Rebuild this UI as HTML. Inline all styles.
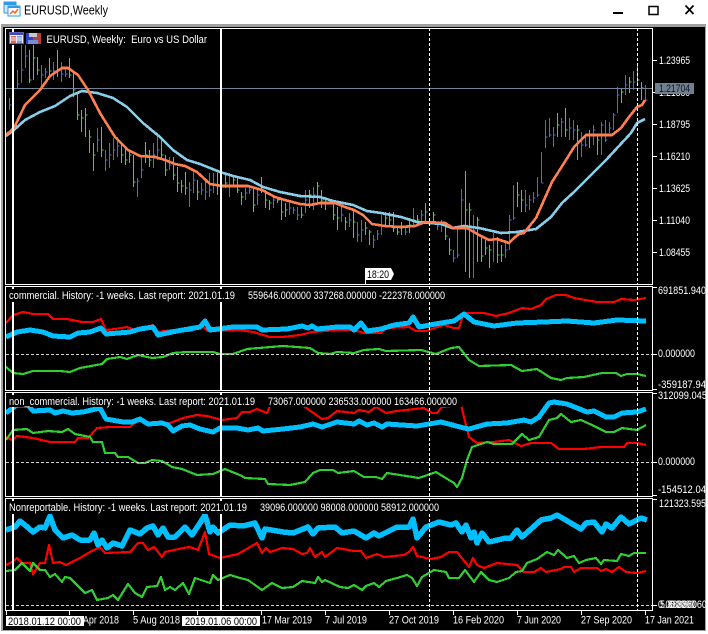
<!DOCTYPE html>
<html><head><meta charset="utf-8"><title>EURUSD,Weekly</title>
<style>
html,body{margin:0;padding:0;background:#fff;width:708px;height:634px;overflow:hidden}
svg{display:block;position:absolute;left:0;top:0}
text{font-family:"Liberation Sans",sans-serif;font-size:11px;fill:#fff}
.s{fill:none;stroke-linejoin:round;shape-rendering:crispEdges}
.c{shape-rendering:crispEdges}
</style></head><body>
<svg width="708" height="634" viewBox="0 0 708 634" xmlns="http://www.w3.org/2000/svg">
<rect width="708" height="634" fill="#fff"/>
<rect x="1" y="24" width="705" height="607" fill="#a0a0a0" class="c"/>
<rect x="3" y="27" width="702" height="603" fill="#000" class="c"/>

<!-- title icon -->
<rect x="4" y="2" width="12" height="11" fill="#cfe6fa" stroke="#3a9be0" class="c"/>
<rect x="4" y="2" width="12" height="3" fill="#2f9be6" class="c"/>
<rect x="8" y="6" width="12" height="10" fill="#fff" stroke="#2f9be6" class="c"/>
<rect x="8" y="6" width="12" height="2" fill="#2f9be6" class="c"/>
<path d="M10 14l3-3 2 2 3-4" fill="none" stroke="#f06a20" stroke-width="1.5"/>
<text x="24" y="14.5" style="font-size:13px;fill:#000" textLength="84" lengthAdjust="spacingAndGlyphs">EURUSD,Weekly</text>

<!-- window controls -->
<rect x="613" y="12" width="10" height="2" fill="#000" class="c"/>
<rect x="649" y="6.5" width="9" height="8" fill="none" stroke="#000" stroke-width="1.5"/>
<path d="M685.5 5.5l8 8.5M693.5 5.5l-8 8.5" stroke="#000" stroke-width="1.7" fill="none"/>

<!-- bars -->
<g transform="translate(.5 0)" class="c" fill="none" stroke-width="1">
<path stroke="#4169ff" d="M9 98V110M9 105h2M17 70V88M17 84h2M21 45V83M21 70h2M25 43V68M25 56h2M41 65V87M41 75h2M45 68V78M45 72h2M53 62V80M53 71h2M61 62V82M61 74h2M65 68V77M65 74h2M97 128V152M97 140h2M105 150V171M105 160h2M109 143V168M109 155h2M113 138V160M113 150h2M117 137V157M117 146h2M137 178V197M137 181h2M141 155V178M141 170h2M153 143V168M153 155h2M157 133V160M157 150h2M169 157V170M169 165h2M189 182V207M189 190h2M193 170V193M193 180h2M201 183V195M201 190h2M205 178V200M205 192h2M209 173V197M209 190h2M213 173V193M213 185h2M229 173V197M229 185h2M245 188V200M245 193h2M249 187V194M249 190h2M257 188V205M257 195h2M273 195V208M273 200h2M289 202V215M289 208h2M293 207V214M293 210h2M297 207V220M297 215h2M305 190V213M305 200h2M313 187V210M313 195h2M341 207V222M341 215h2M349 213V227M349 220h2M357 222V242M357 235h2M361 220V242M361 230h2M373 235V248M373 240h2M377 230V240M377 234h2M381 215V235M381 225h2M405 228V235M405 232h2M413 208V227M413 220h2M421 210V225M421 215h2M437 222V230M437 226h2M441 220V232M441 225h2M453 250V262M453 258h2M457 228V258M457 255h2M461 189V228M461 200h2M473 215V278M473 230h2M493 233V262M493 240h2M505 240V258M505 250h2M509 215V250M509 220h2M513 185V220M513 218h2M525 190V212M525 205h2M529 195V210M529 200h2M533 192V203M533 198h2M537 177V197M537 195h2M541 152V183M541 183h2M545 120V148M545 137h2M549 118V137M549 135h2M553 127V147M553 135h2M561 118V137M561 122h2M569 118V140M569 128h2M573 120V140M573 130h2M581 132V157M581 145h2M585 135V147M585 145h2M593 125V145M593 130h2M601 122V155M601 125h2M605 120V142M605 140h2M609 122V133M609 128h2M613 113V130M613 115h2M617 87V113M617 95h2M625 75V95M625 85h2M633 71V90M633 82h2M645 85V100M645 100h2"/>
<path stroke="#32e032" d="M29 50V83M29 80h2M33 43V80M33 58h2M37 57V75M37 70h2M49 58V75M49 71h2M57 50V77M57 70h2M69 58V78M69 75h2M73 73V97M73 90h2M77 93V120M77 115h2M81 110V132M81 118h2M85 108V137M85 115h2M89 130V153M89 137h2M93 143V171M93 155h2M101 127V157M101 150h2M121 145V163M121 155h2M125 147V165M125 160h2M129 150V163M129 155h2M133 155V187M133 182h2M145 142V163M145 155h2M149 150V167M149 160h2M161 137V160M161 155h2M165 155V176M165 170h2M173 157V180M173 175h2M177 167V192M177 183h2M181 180V193M181 186h2M185 172V195M185 188h2M197 180V200M197 192h2M217 173V195M217 185h2M225 173V188M225 183h2M233 175V187M233 180h2M237 177V193M237 190h2M241 192V205M241 197h2M253 188V212M253 205h2M261 177V193M261 190h2M265 190V208M265 200h2M269 200V210M269 203h2M277 197V203M277 200h2M281 198V220M281 212h2M285 203V217M285 210h2M301 207V218M301 215h2M309 190V208M309 195h2M317 182V205M317 186h2M321 190V208M321 200h2M325 197V210M325 204h2M333 203V220M333 215h2M337 207V230M337 218h2M345 217V230M345 222h2M353 210V238M353 222h2M365 222V235M365 228h2M369 230V245M369 232h2M385 212V225M385 218h2M389 212V227M389 220h2M393 212V232M393 228h2M397 228V235M397 232h2M401 222V235M401 228h2M409 218V233M409 225h2M417 215V223M417 220h2M425 203V222M425 212h2M433 212V222M433 215h2M445 222V240M445 236h2M449 238V255M449 250h2M465 171V272M465 210h2M469 203V278M469 210h2M477 217V262M477 220h2M481 238V262M481 256h2M485 240V255M485 248h2M489 245V268M489 250h2M497 237V263M497 255h2M501 245V262M501 255h2M517 182V207M517 195h2M521 190V212M521 200h2M557 113V137M557 125h2M565 108V137M565 130h2M577 125V160M577 130h2M589 130V148M589 135h2M597 135V155M597 140h2M621 88V103M621 92h2M629 77V93M629 82h2M637 65V85M637 80h2M641 82V100M641 88h2"/>
</g>

<!-- price line -->
<line x1="6" y1="88.5" x2="652" y2="88.5" stroke="#6f8499" class="c"/>

<!-- MAs -->
<polyline class="s" stroke="#87ceeb" stroke-width="2.6" points="6,136 14,130 25,120 40,112 55,106 70,96 82,91 97,93 113,98 127,107 143,123 160,137 173,150 187,160 200,164 220,172 233,176 250,180 263,187 280,192 300,196 320,197 333,201 353,205 367,211 381,213 401,217 417,222 441,224 452,228 464,226 479,228 501,233 517,232 536,229 551,217 562,203 574,192 594,172 606,160 631,133 637,123 645,119"/>
<polyline class="s" stroke="#ff7f50" stroke-width="2.6" points="6,135 14,128 25,105 40,90 50,76 62,68 68,68 78,75 88,90 100,113 115,137 128,150 140,156 155,157 165,160 175,164 185,166 197,172 210,184 222,186 248,186 262,190 275,197 285,200 300,204 310,205 320,203 335,203 345,207 354,210 363,215 372,224 385,226 400,227 415,226 425,222 445,223 453,228 467,228 479,235 489,240 497,239 509,243 514,238 519,234 524,233 536,218 544,200 552,182 566,160 574,147 586,135 612,135 621,128 629,117 637,107 642,105 645,100"/>

<!-- pane 1 series -->
<polyline class="s" stroke="#ff0000" stroke-width="2.2" points="6,323 13,315 23,312 33,314 48,314 53,319 67,319 82,322 93,322 101,319 106,330 115,329 127,327 135,330 147,327 153,325 157,332 173,330 190,331 203,327 208,331 240,330 253,332 270,337 283,337 300,335 312,332 337,330 354,330 364,333 381,333 387,328 409,327 416,331 426,331 444,325 454,328 459,328 464,313 484,313 496,316 509,313 522,308 531,309 541,305 546,299 556,295 566,295 574,298 597,302 614,302 621,299 634,300 646,298"/>
<polyline class="s" stroke="#32cd32" stroke-width="2.2" points="6,367 13,373 23,374 33,371 60,371 70,372 80,368 102,364 107,359 120,357 127,359 138,355 152,358 163,357 173,353 187,352 213,352 220,354 233,354 247,349 283,346 310,348 318,353 330,354 337,352 354,353 364,350 379,349 386,351 421,350 436,354 451,348 459,347 469,360 479,366 511,365 522,371 537,369 551,378 561,380 567,378 584,377 602,373 616,373 621,376 627,374 637,374 646,376"/>
<polyline class="s" stroke="#00bfff" stroke-width="5" points="6,337 17,332 30,330 43,332 53,336 70,337 78,333 90,332 101,328 106,334 130,332 140,329 153,327 158,335 177,331 200,327 205,321 210,330 233,327 257,327 262,330 287,329 302,326 308,328 312,326 317,329 337,327 350,327 354,330 361,323 367,331 381,329 394,325 409,323 413,317 419,327 441,323 454,321 464,314 474,322 494,326 517,323 544,322 567,321 594,323 617,320 646,321"/>

<!-- pane 2 series -->
<polyline class="s" stroke="#ff0000" stroke-width="2.2" points="6,437 12,440 17,436 33,438 50,442 75,442 78,438 88,438 97,428 110,427 130,427 140,419 150,425 170,423 183,418 197,415 207,416 222,420 237,418 242,412 250,412 257,409 267,413 270,406 302,405 312,412 322,419 328,418 337,411 354,413 359,410 369,412 376,407 386,413 397,411 424,408 432,413 437,413 442,407 461,405 466,425 469,437 477,443 494,442 509,440 521,446 531,443 551,443 559,449 584,449 601,447 624,447 627,443 637,443 646,445"/>
<polyline class="s" stroke="#32cd32" stroke-width="2.2" points="6,440 13,430 27,429 33,433 48,431 62,432 68,429 75,434 90,437 93,442 102,442 105,453 115,453 118,457 128,457 138,463 145,463 152,460 162,461 172,467 182,469 197,475 213,474 225,469 242,476 245,478 265,479 268,484 290,485 305,482 313,473 320,470 333,470 338,473 354,471 364,477 376,477 382,479 387,473 419,478 436,472 444,477 454,483 457,487 462,478 467,460 472,447 487,442 494,444 512,444 522,434 529,440 539,437 549,420 557,418 561,414 571,422 581,420 592,425 606,432 614,432 622,428 637,430 646,425"/>
<polyline class="s" stroke="#00bfff" stroke-width="5" points="6,413 10,410 17,405 28,405 33,411 50,410 55,413 63,411 72,413 83,412 100,408 106,419 123,422 132,422 140,419 148,424 162,423 168,425 173,431 182,426 190,425 200,429 213,432 220,428 237,428 248,430 258,428 263,431 283,429 300,427 313,424 322,427 337,422 354,424 359,421 367,425 374,423 382,427 387,424 417,426 441,422 464,428 469,429 487,424 507,423 524,420 531,422 539,417 549,403 554,402 567,404 577,408 587,412 594,411 606,417 614,417 622,413 637,412 646,409"/>

<!-- pane 3 series -->
<polyline class="s" stroke="#ff0000" stroke-width="2.2" points="6,565 12,562 17,558 22,563 30,563 33,574 40,563 45,563 49,545 53,563 60,562 66,565 80,558 90,552 100,547 105,553 130,552 138,543 143,543 148,550 154,547 162,557 165,552 183,548 190,547 198,550 205,532 209,554 220,558 238,554 250,547 257,543 262,553 266,548 270,552 282,548 293,549 302,554 307,553 310,548 315,557 322,552 325,557 337,548 354,551 361,551 366,558 377,554 384,557 404,555 409,552 413,547 417,556 431,559 441,557 449,552 457,552 469,567 473,558 477,565 484,568 497,563 517,565 524,572 534,572 541,568 546,572 561,569 564,567 571,567 574,572 581,568 597,568 601,571 606,569 612,572 619,567 626,572 637,573 646,571"/>
<polyline class="s" stroke="#32cd32" stroke-width="2.2" points="6,571 15,570 22,563 30,571 33,563 40,570 45,570 50,577 55,574 62,582 65,577 70,578 85,593 92,590 97,600 108,598 113,595 118,600 128,584 135,593 142,597 147,587 157,586 161,577 165,590 170,587 175,590 183,583 189,594 195,578 210,583 213,575 218,580 230,575 240,578 248,580 262,590 272,583 282,588 293,587 302,581 315,583 318,577 322,582 325,580 340,587 348,588 354,585 362,590 366,586 374,583 379,587 386,581 397,578 407,575 412,578 417,586 422,577 434,570 446,572 449,578 459,578 465,570 474,582 481,572 489,580 497,582 509,578 516,572 522,571 527,563 537,559 547,552 554,555 558,550 567,558 574,556 579,563 586,560 596,558 601,564 604,560 617,561 621,554 629,556 634,553 646,553"/>
<polyline class="s" stroke="#00bfff" stroke-width="5.5" points="6,530 15,527 20,521 25,525 33,532 40,527 45,528 50,516 55,530 63,538 72,535 80,540 90,540 94,533 98,545 102,540 107,548 113,543 122,546 130,530 140,534 147,528 153,526 158,535 163,528 168,537 175,537 185,527 192,535 200,523 205,515 210,532 213,527 218,533 230,525 243,526 255,523 262,538 265,529 283,532 293,533 308,527 313,534 318,528 335,527 342,533 354,531 366,538 374,533 379,536 397,527 409,527 413,519 417,538 426,527 439,522 451,525 456,523 462,532 466,525 471,538 474,532 477,543 482,533 489,542 506,538 511,538 517,530 522,537 541,520 551,518 557,515 564,519 581,529 586,523 594,522 602,532 606,524 612,528 621,517 629,524 641,518 647,520"/>

<!-- zero lines -->
<g class="c" stroke="#d0d0d0" stroke-dasharray="3 2">
<line x1="6" y1="354.5" x2="652" y2="354.5"/>
<line x1="6" y1="462.5" x2="652" y2="462.5"/>
<line x1="6" y1="605.5" x2="652" y2="605.5"/>
</g>

<!-- vertical lines -->
<g class="c" stroke="#fff" stroke-width="2">
<path d="M13 28V284M13 287V390M13 393V496M13 499V610M221 28V284M221 287V390M221 393V496M221 499V610"/>
</g>
<g class="c" stroke="#fff" stroke-dasharray="3 2">
<path d="M429.5 28V284M429.5 287V390M429.5 393V496M429.5 499V610M637.5 28V284M637.5 287V390M637.5 393V496M637.5 499V610"/>
</g>

<!-- pane frames -->
<g class="c" fill="none" stroke="#fff">
<rect x="5.5" y="28.5" width="647" height="256"/>
<rect x="5.5" y="286.5" width="647" height="104"/>
<rect x="5.5" y="392.5" width="647" height="104"/>
<rect x="5.5" y="498.5" width="647" height="112"/>
</g>

<!-- pane labels -->
<g class="c" fill="#000">
<rect x="7" y="289" width="440" height="13"/>
<rect x="7" y="395" width="455" height="12"/>
<rect x="7" y="501" width="434" height="13"/>
</g>
<text x="9" y="299" textLength="226" lengthAdjust="spacingAndGlyphs">commercial. History: -1 weeks. Last report: 2021.01.19</text>
<text x="248" y="299" textLength="197" lengthAdjust="spacingAndGlyphs">559646.000000 337268.000000 -222378.000000</text>
<text x="9" y="405" textLength="246" lengthAdjust="spacingAndGlyphs">non_commercial. History: -1 weeks. Last report: 2021.01.19</text>
<text x="268" y="405" textLength="189" lengthAdjust="spacingAndGlyphs">73067.000000 236533.000000 163466.000000</text>
<text x="9" y="511" textLength="238" lengthAdjust="spacingAndGlyphs">Nonreportable. History: -1 weeks. Last report: 2021.01.19</text>
<text x="260" y="511" textLength="179" lengthAdjust="spacingAndGlyphs">39096.000000 98008.000000 58912.000000</text>

<!-- main header -->
<rect x="9" y="32" width="33" height="13" fill="#000" class="c"/>
<rect x="9.5" y="32.5" width="14" height="11" fill="#e8e8f8" stroke="#5a60c0" class="c"/>
<rect x="10" y="33" width="13" height="2" fill="#3c4ab8" class="c"/>
<rect x="11" y="36" width="5" height="7" fill="#e06a50" class="c"/>
<rect x="17" y="36" width="5" height="7" fill="#7c9be0" class="c"/>
<path d="M11 38h11M11 40h11" stroke="#e8e8f8" class="c"/>
<rect x="26" y="33" width="7" height="11" fill="#2a3fd0" class="c"/>
<rect x="33" y="33" width="8" height="11" fill="#b8403a" class="c"/>
<rect x="29" y="33" width="8" height="4" fill="#c8c8c8" class="c"/>
<rect x="28" y="40" width="10" height="4" fill="#7c8ad0" class="c"/>
<text x="46.5" y="43" textLength="160.5" lengthAdjust="spacingAndGlyphs">EURUSD, Weekly:&#160; Euro vs US Dollar</text>

<!-- 18:20 flag -->
<line x1="365.5" y1="268" x2="365.5" y2="284" stroke="#fff" class="c"/>
<path d="M365 268H391L394 274L391 280H365Z" fill="#fff"/>
<text x="367" y="278" textLength="22" lengthAdjust="spacingAndGlyphs" style="fill:#000">18:20</text>

<!-- price axis ticks -->
<path class="c" stroke="#fff" d="M652 60.5h5M652 92.5h5M652 124.5h5M652 156.5h5M652 188.5h5M652 220.5h5M652 252.5h5M652 287.5h5M652 354.5h5M652 389.5h5M652 393.5h5M652 462.5h5M652 495.5h5M652 499.5h5M652 605.5h5"/>
<text x="659" y="64" textLength="31" lengthAdjust="spacingAndGlyphs">1.23965</text>
<text x="659" y="96" textLength="31" lengthAdjust="spacingAndGlyphs">1.21380</text>
<text x="659" y="128" textLength="31" lengthAdjust="spacingAndGlyphs">1.18795</text>
<text x="659" y="160" textLength="31" lengthAdjust="spacingAndGlyphs">1.16210</text>
<text x="659" y="192" textLength="31" lengthAdjust="spacingAndGlyphs">1.13625</text>
<text x="659" y="224" textLength="31" lengthAdjust="spacingAndGlyphs">1.11040</text>
<text x="659" y="256" textLength="31" lengthAdjust="spacingAndGlyphs">1.08455</text>
<rect x="655" y="83" width="39" height="11" fill="#708090" class="c"/>
<text x="659" y="92" textLength="31" lengthAdjust="spacingAndGlyphs" style="fill:#101418">1.21704</text>

<text x="658" y="294" textLength="48" lengthAdjust="spacingAndGlyphs">691851.940</text>
<text x="658" y="357" textLength="37" lengthAdjust="spacingAndGlyphs">0.000000</text>
<text x="658" y="388" textLength="48" lengthAdjust="spacingAndGlyphs">-359187.94</text>
<text x="658" y="399" textLength="49" lengthAdjust="spacingAndGlyphs">312099.045</text>
<text x="658" y="465" textLength="37" lengthAdjust="spacingAndGlyphs">0.000000</text>
<text x="658" y="493" textLength="48" lengthAdjust="spacingAndGlyphs">-154512.04</text>
<text x="659" y="507" textLength="47" lengthAdjust="spacingAndGlyphs">121323.595</text>
<text x="658" y="608" textLength="37" lengthAdjust="spacingAndGlyphs">0.000000</text>
<text x="660" y="608" textLength="37" lengthAdjust="spacingAndGlyphs">5.880060</text>
<text x="669" y="608" textLength="38" lengthAdjust="spacingAndGlyphs">6.880060</text>

<!-- time axis -->
<path class="c" stroke="#fff" d="M6.5 610v5M69.5 610v5M133.5 610v5M197.5 610v5M261.5 610v5M325.5 610v5M389.5 610v5M453.5 610v5M517.5 610v5M581.5 610v5M645.5 610v5"/>
<text x="83" y="623.5" textLength="36" lengthAdjust="spacingAndGlyphs">Apr 2018</text>
<text x="133" y="623.5" textLength="47" lengthAdjust="spacingAndGlyphs">5 Aug 2018</text>
<text x="262" y="623.5" textLength="50" lengthAdjust="spacingAndGlyphs">17 Mar 2019</text>
<text x="325" y="623.5" textLength="42" lengthAdjust="spacingAndGlyphs">7 Jul 2019</text>
<text x="389" y="623.5" textLength="50" lengthAdjust="spacingAndGlyphs">27 Oct 2019</text>
<text x="453" y="623.5" textLength="51" lengthAdjust="spacingAndGlyphs">16 Feb 2020</text>
<text x="517" y="623.5" textLength="44" lengthAdjust="spacingAndGlyphs">7 Jun 2020</text>
<text x="581" y="623.5" textLength="51" lengthAdjust="spacingAndGlyphs">27 Sep 2020</text>
<text x="645" y="623.5" textLength="49" lengthAdjust="spacingAndGlyphs">17 Jan 2021</text>

<rect x="6" y="616" width="78" height="10" fill="#fff" class="c"/>
<text x="8" y="625" textLength="73" lengthAdjust="spacingAndGlyphs" style="fill:#000">2018.01.12 00:00</text>
<rect x="182" y="616" width="78" height="10" fill="#fff" class="c"/>
<text x="185" y="625" textLength="72" lengthAdjust="spacingAndGlyphs" style="fill:#000">2019.01.06 00:00</text>
</svg>
</body></html>
